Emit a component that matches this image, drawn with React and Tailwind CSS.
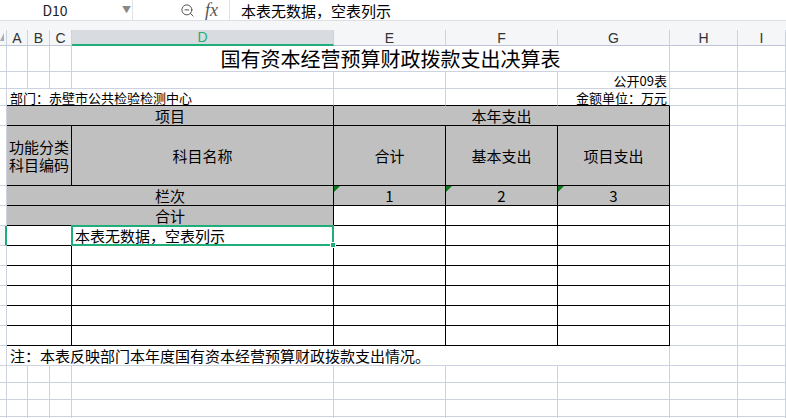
import React from "react";
import { ZoomOut } from "lucide-react";

const COLS = "grid grid-cols-[7px_21px_22px_22px_262px_112px_112px_112px_68px_1fr]";
const CJK = "font-['Noto_Sans_CJK_SC','Noto_Sans',sans-serif]";

function Cell({ span = "col-span-1", r = "light", b = "light", gray, className = "", children }) {
  return (
    <div
      className={`${span} ${r === "dark" ? "border-r border-r-black" : "border-r border-r-[#cdd2e1]"} ${
        b === "dark" ? "border-b border-b-black" : "border-b border-b-[#cdd2e1]"
      } ${gray ? "bg-[#c0c0c0]" : "bg-white"} relative flex items-center min-w-0 min-h-0 whitespace-nowrap ${className}`}
    >
      {children}
    </div>
  );
}

function Tri() {
  return (
    <svg className="absolute top-0 left-0" width="6" height="6" viewBox="0 0 6 6">
      <polygon points="0,0 6,0 0,6" fill="#0a7a1a" />
    </svg>
  );
}

function RowHead({ sel }) {
  return sel ? (
    <div className="border-r-2 border-r-[#1fae7a] border-b border-b-[#cdd2e1] bg-[#f5f6f8]" />
  ) : (
    <Cell className="bg-[#f7f8fa]" />
  );
}

function EmptyRow({ h = "h-[17px]" }) {
  return (
    <div className={`${COLS} grid-rows-[100%] ${h}`}>
      <RowHead />
      <Cell />
      <Cell />
      <Cell />
      <Cell />
      <Cell />
      <Cell />
      <Cell />
      <Cell />
      <Cell />
    </div>
  );
}

function DataRow({ sel, text }) {
  return (
    <div className={`${COLS} grid-rows-[100%] h-[20px]`}>
      <RowHead sel={sel} />
      <Cell span="col-span-3" r="dark" b="dark" />
      <Cell r="dark" b="dark" className="overflow-visible">
        {text && <span className="pl-[3px] text-[15px] leading-none">{text}</span>}
        {sel && (
          <>
            <div className="absolute z-10 -top-[1px] -left-[1px] -right-[1px] -bottom-[1px] border-2 border-[#1fae7a] pointer-events-none" />
            <div className="absolute z-10 -right-[3px] -bottom-[3px] w-[6px] h-[6px] bg-[#1fae7a] border border-white" />
          </>
        )}
      </Cell>
      <Cell r="dark" b="dark" />
      <Cell r="dark" b="dark" />
      <Cell r="dark" b="dark" />
      <Cell />
      <Cell />
    </div>
  );
}

export default function App() {
  const letters = ["A", "B", "C", "D", "E", "F", "G", "H", "I"];
  return (
    <div className={`w-[786px] h-[418px] overflow-hidden bg-white text-black ${CJK}`}>
      {/* formula bar */}
      <div className="flex h-[21px] border-b border-[#dcdee2] bg-white">
        <div className="w-[133px] flex items-center border-r border-[#e1e3e6]">
          <span className="w-[110px] text-center text-[14px] leading-none text-[#222]">D10</span>
          <span className="text-[9px] text-[#888] ml-[12px]">▼</span>
        </div>
        <div className="w-[97px] flex items-center pl-[47px] gap-[10px] border-r border-[#e1e3e6]">
          <ZoomOut size={15} strokeWidth={1.6} color="#555" />
          <span className="font-['Liberation_Serif',serif] italic text-[18px] leading-none text-[#555]">fx</span>
        </div>
        <div className="flex items-center pl-[11px] text-[15px] leading-none">本表无数据，空表列示</div>
      </div>

      {/* column headers */}
      <div className="h-[25px] bg-[#f5f6f7] flex flex-col justify-end">
        <div className={`${COLS} h-[16px] font-['Liberation_Sans',Arial,sans-serif] text-[14px] text-[#333]`}>
          <div className="relative border-r border-r-[#cdd2e1] border-b border-b-[#bfc5d4]">
            <svg className="absolute left-0 top-[3px]" width="4" height="8" viewBox="0 0 4 8">
              <polygon points="4,0 4,8 0,8" fill="#a8acb3" />
            </svg>
          </div>
          {letters.map((l) =>
            l === "D" ? (
              <div key={l} className="flex items-center justify-center bg-[#d8dbe0] border-r border-r-[#cdd2e1] border-b-2 border-b-[#1fae7a] text-[#1fae7a] leading-none">
                {l}
              </div>
            ) : (
              <div key={l} className="flex items-center justify-center border-r border-r-[#cdd2e1] border-b border-b-[#bfc5d4] leading-none">
                {l}
              </div>
            )
          )}
        </div>
      </div>

      {/* title */}
      <div className={`${COLS} grid-rows-[100%] h-[26px]`}>
        <RowHead />
        <Cell />
        <Cell />
        <Cell />
        <Cell span="col-span-4" className="justify-center pl-[40px] text-[20px] leading-none">
          国有资本经营预算财政拨款支出决算表
        </Cell>
        <Cell />
        <Cell />
      </div>

      <div className={`${COLS} grid-rows-[100%] h-[17px]`}>
        <RowHead />
        <Cell />
        <Cell />
        <Cell />
        <Cell />
        <Cell />
        <Cell />
        <Cell className="justify-end pr-[2px] text-[13px] leading-none">公开09表</Cell>
        <Cell />
        <Cell />
      </div>

      <div className={`${COLS} grid-rows-[100%] h-[17px]`}>
        <RowHead />
        <Cell span="col-span-4" b="dark" className="pl-[3px] text-[13px] leading-none">
          部门：赤壁市公共检验检测中心
        </Cell>
        <Cell b="dark" />
        <Cell b="dark" />
        <Cell b="dark" className="justify-end pr-[2px] text-[13px] leading-none">金额单位：万元</Cell>
        <Cell />
        <Cell />
      </div>

      {/* header block */}
      <div className={`${COLS} grid-rows-[100%] h-[20px] text-[15px] leading-none`}>
        <RowHead />
        <Cell span="col-span-4" r="dark" b="dark" gray className="justify-center">项目</Cell>
        <Cell span="col-span-3" r="dark" b="dark" gray className="justify-center">本年支出</Cell>
        <Cell />
        <Cell />
      </div>

      <div className={`${COLS} grid-rows-[100%] h-[60px] text-[15px]`}>
        <RowHead />
        <Cell span="col-span-3" r="dark" b="dark" gray className="justify-center leading-[18px] whitespace-normal text-center">
          功能分类<br />科目编码
        </Cell>
        <Cell r="dark" b="dark" gray className="justify-center leading-none">科目名称</Cell>
        <Cell r="dark" b="dark" gray className="justify-center leading-none">合计</Cell>
        <Cell r="dark" b="dark" gray className="justify-center leading-none">基本支出</Cell>
        <Cell r="dark" b="dark" gray className="justify-center leading-none">项目支出</Cell>
        <Cell />
        <Cell />
      </div>

      <div className={`${COLS} grid-rows-[100%] h-[20px] text-[15px] leading-none`}>
        <RowHead />
        <Cell span="col-span-4" r="dark" b="dark" gray className="justify-center">栏次</Cell>
        <Cell r="dark" b="dark" gray className="justify-center"><Tri />1</Cell>
        <Cell r="dark" b="dark" gray className="justify-center"><Tri />2</Cell>
        <Cell r="dark" b="dark" gray className="justify-center"><Tri />3</Cell>
        <Cell />
        <Cell />
      </div>

      <div className={`${COLS} grid-rows-[100%] h-[20px] text-[15px] leading-none`}>
        <RowHead />
        <Cell span="col-span-4" r="dark" b="dark" gray className="justify-center">合计</Cell>
        <Cell r="dark" b="dark" />
        <Cell r="dark" b="dark" />
        <Cell r="dark" b="dark" />
        <Cell />
        <Cell />
      </div>

      <DataRow sel text="本表无数据，空表列示" />
      <DataRow />
      <DataRow />
      <DataRow />
      <DataRow />
      <DataRow />

      {/* note */}
      <div className={`${COLS} grid-rows-[100%] h-[20px]`}>
        <RowHead />
        <Cell span="col-span-7" className="pl-[3px] text-[15px] leading-none">
          注：本表反映部门本年度国有资本经营预算财政拨款支出情况。
        </Cell>
        <Cell />
        <Cell />
      </div>

      <EmptyRow />
      <EmptyRow />
      <EmptyRow />
      <EmptyRow />
    </div>
  );
}
